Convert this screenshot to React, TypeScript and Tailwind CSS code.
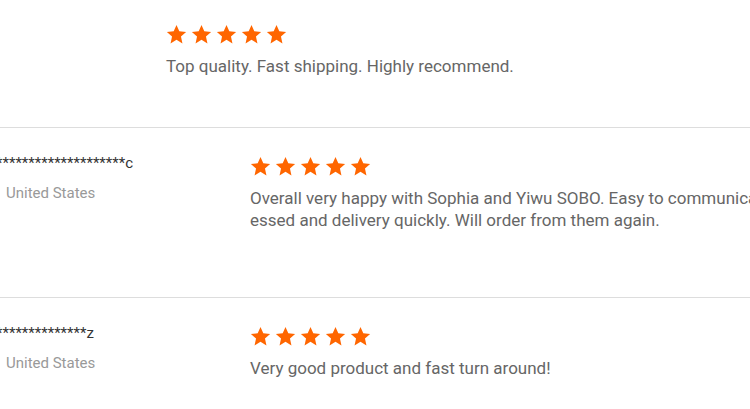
const Star = () => (
  <svg viewBox="0 0 24 24" className="h-[21px] w-[21px]" aria-hidden="true">
    <polygon
      points="12,1.2 15.2,8.4 23,9.2 17.1,14.4 18.8,22.2 12,18.1 5.2,22.2 6.9,14.4 1,9.2 8.8,8.4"
      fill="#ff6600"
    />
  </svg>
);

const Stars = () => (
  <div className="flex gap-[4px]">
    {[0, 1, 2, 3, 4].map((i) => (
      <Star key={i} />
    ))}
  </div>
);

type Review = {
  name: string;
  country: string;
  lines: string[];
  height: string;
};

const reviews: Review[] = [
  {
    name: "********************c",
    country: "United States",
    lines: [
      "Overall very happy with Sophia and Yiwu SOBO. Easy to communicate, order proc",
      "essed and delivery quickly. Will order from them again.",
    ],
    height: "h-[170px]",
  },
  {
    name: "**************z",
    country: "United States",
    lines: ["Very good product and fast turn around!"],
    height: "h-[112px]",
  },
];

export default function App() {
  return (
    <div className="w-[750px] h-[409px] overflow-hidden bg-white font-['Roboto',sans-serif]">
      <div className="h-[127px] pl-[166px] pt-[24px]">
        <Stars />
        <p className="mt-[10px] text-[17px] leading-[22px] text-[#666]">
          Top quality. Fast shipping. Highly recommend.
        </p>
      </div>

      {reviews.map((r) => (
        <div key={r.name} className={`flex border-t border-[#dddddd] ${r.height}`}>
          <div className="w-[250px] shrink-0 pl-[6px] pt-[24px]">
            <div className="-ml-[10px] whitespace-nowrap text-[15px] leading-[22px] text-[#333]">{r.name}</div>
            <div className="mt-[8px] text-[15px] leading-[22px] text-[#999]">{r.country}</div>
          </div>
          <div className="pt-[28px]">
            <Stars />
            <div className="mt-[10px] text-[17px] leading-[22px] text-[#666]">
              {r.lines.map((l) => (
                <div key={l} className="whitespace-nowrap">
                  {l}
                </div>
              ))}
            </div>
          </div>
        </div>
      ))}
    </div>
  );
}
